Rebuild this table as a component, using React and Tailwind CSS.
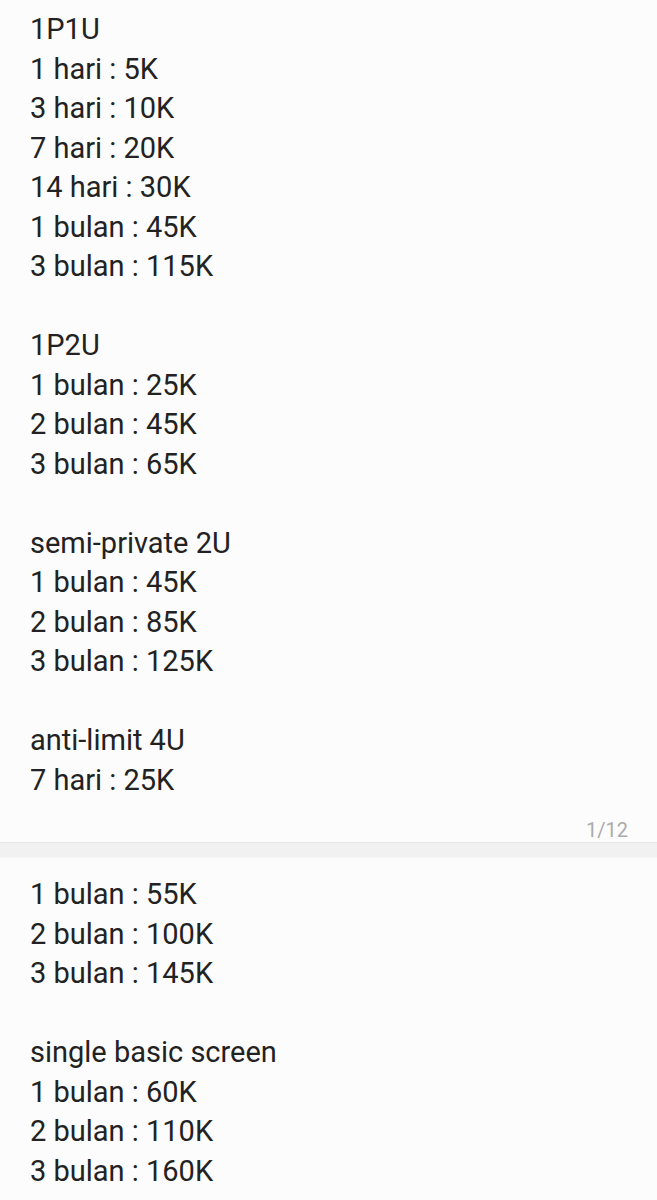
const page1 = [
  '1P1U',
  '1 hari : 5K',
  '3 hari : 10K',
  '7 hari : 20K',
  '14 hari : 30K',
  '1 bulan : 45K',
  '3 bulan : 115K',
  '',
  '1P2U',
  '1 bulan : 25K',
  '2 bulan : 45K',
  '3 bulan : 65K',
  '',
  'semi-private 2U',
  '1 bulan : 45K',
  '2 bulan : 85K',
  '3 bulan : 125K',
  '',
  'anti-limit 4U',
  '7 hari : 25K',
];

const page2 = [
  '1 bulan : 55K',
  '2 bulan : 100K',
  '3 bulan : 145K',
  '',
  'single basic screen',
  '1 bulan : 60K',
  '2 bulan : 110K',
  '3 bulan : 160K',
];

function Lines({ items }) {
  return (
    <div className="px-[30px] text-[29px] leading-[39.5px] text-[#222222]">
      {items.map((t, i) => (
        <div key={i} className="h-[39.5px] whitespace-nowrap">
          {t}
        </div>
      ))}
    </div>
  );
}

export default function App() {
  return (
    <div
      className="min-h-[1200px] bg-[#fcfcfc] overflow-hidden"
      style={{ fontFamily: 'Roboto, "Noto Sans", sans-serif' }}
    >
      <div className="pt-[10px]">
        <Lines items={page1} />
        <div className="flex justify-end pr-[29px] pt-[18px] h-[42px] text-[20px] leading-[24px] text-[#ababab]">
          1/12
        </div>
      </div>
      <div className="border-t border-[#e6e6e6] border-b border-b-[#f6f6f6] bg-[#f1f1f1] h-[16px]" />
      <div className="pt-[17px]">
        <Lines items={page2} />
      </div>
    </div>
  );
}
